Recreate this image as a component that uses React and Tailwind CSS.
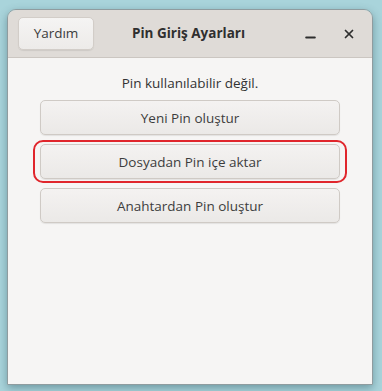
import { X, Minus } from 'lucide-react';

const font = { fontFamily: '"Open Sans", "Noto Sans", sans-serif' };

function PinButton({ label }) {
  return (
    <button className="w-full h-[35px] rounded-[5px] border border-[#cfcac5] bg-gradient-to-b from-[#f4f2f1] to-[#ebe9e7] shadow-[0_1px_1px_rgba(0,0,0,0.08)] text-[13.5px] text-[#3d3d3d]">
      {label}
    </button>
  );
}

function App() {
  return (
    <div className="w-[382px] h-[391px] bg-[#a9d4db] pt-[9px] pl-[7px]" style={font}>
      <div className="w-[366px] h-[376px] flex flex-col rounded-t-[9px] border border-[#8f9c9f] overflow-hidden shadow-[0_3px_8px_rgba(40,80,90,0.45)]">
        {/* başlık çubuğu */}
        <div className="h-[48px] shrink-0 flex items-center bg-[#dfdbd7] border-b border-[#cbc6c1] px-[10px]">
          <button className="w-[76px] h-[33px] rounded-[5px] border border-[#d2cdc8] bg-gradient-to-b from-[#f5f4f3] to-[#edebe9] shadow-[0_1px_1px_rgba(0,0,0,0.08)] text-[13.5px] text-[#3c3c3c]">
            Yardım
          </button>
          <div className="flex-1 text-center text-[13.5px] font-bold text-[#2f2f2f] pr-[20px]">Pin Giriş Ayarları</div>
          <div className="flex items-center gap-[24px] pr-[6px]">
            <Minus size={15} strokeWidth={3} className="text-[#2e2e2e] mt-[8px]" />
            <X size={14} strokeWidth={3} className="text-[#2e2e2e]" />
          </div>
        </div>
        {/* içerik */}
        <div className="flex-1 bg-[#f6f5f4] px-[32px] pt-[15px]">
          <p className="text-center text-[13.5px] text-[#333] mb-[7px]">Pin kullanılabilir değil.</p>
          <div className="flex flex-col gap-[9px]">
            <PinButton label="Yeni Pin oluştur" />
            <div className="relative">
              <div className="absolute -inset-x-[7px] -inset-y-[4px] rounded-[10px] border-2 border-[#e0262c] pointer-events-none" />
              <PinButton label="Dosyadan Pin içe aktar" />
            </div>
            <PinButton label="Anahtardan Pin oluştur" />
          </div>
        </div>
      </div>
    </div>
  );
}

export default App;
